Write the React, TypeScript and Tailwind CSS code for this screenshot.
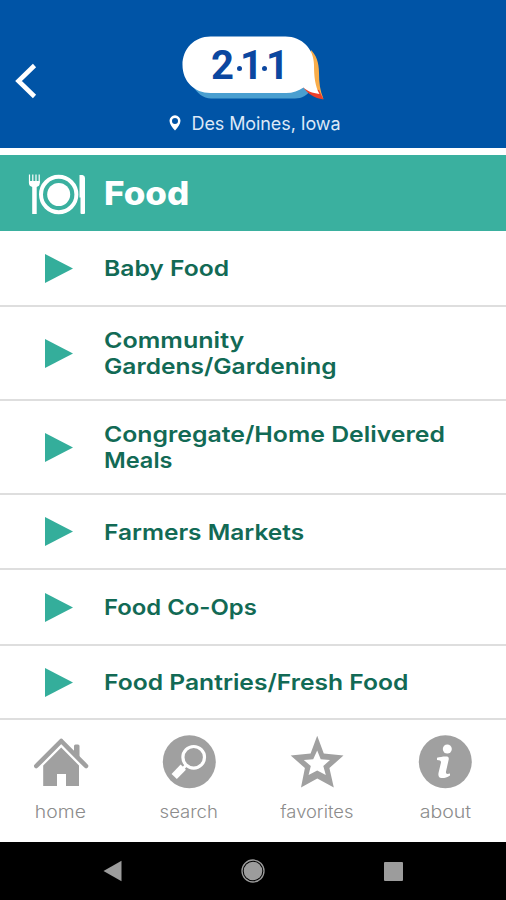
import React from 'react'

const categories = [
  { height: 'h-[76px]', lines: [{ text: 'Baby Food', stretch: 'scale-x-[1.12]' }] },
  {
    height: 'h-[94px]',
    lines: [
      { text: 'Community', stretch: 'scale-x-[1.14]' },
      { text: 'Gardens/Gardening', stretch: 'scale-x-[1.115]' },
    ],
  },
  {
    height: 'h-[94px]',
    lines: [
      { text: 'Congregate/Home Delivered', stretch: 'scale-x-[1.127]' },
      { text: 'Meals', stretch: 'scale-x-[1.07]' },
    ],
  },
  { height: 'h-[75px]', lines: [{ text: 'Farmers Markets', stretch: 'scale-x-[1.112]' }] },
  { height: 'h-[76px]', lines: [{ text: 'Food Co-Ops', stretch: 'scale-x-[1.085]' }] },
  { height: 'h-[74px]', lines: [{ text: 'Food Pantries/Fresh Food', stretch: 'scale-x-[1.12]' }] },
]

const Logo = () => (
  <div className="relative h-[64px] w-[144px]">
    <svg width="144" height="64" viewBox="181 36 144 64" fill="none">
      {/* Coloured layers behind the bubble */}
      <path d="M191 84C197 93 203 98.500 211 98.500H295C302 98.500 307 95 311 90L300 84Z" fill="#4a9fd0" />
      <path d="M311 50C316 55 319 62 319 73C319 82 320 91 323.500 99L309 84Z" fill="#f9ad4a" />
      <path d="M303 87C308 94 314 98 323.500 99.500L319 90Z" fill="#ee3f2b" />
      <path d="M210.500 36.500H285.500C302 36.500 314 49 314 65C314 76 315 86 319.500 94C312 93 307 91 303.500 87.500C298.500 91 293 93 286 93H210.500C194 93 182.500 81 182.500 65C182.500 49 194 36.500 210.500 36.500Z" fill="#fff" />
    </svg>
    <div className="absolute left-[30px] top-[9px] flex h-[42px] items-center font-['Roboto'] text-[40px] font-bold leading-[42px] text-[#0b47a0]">
      <span className="w-[23px]">2</span>
      <span className="ml-[3px] mt-[4px] h-[5px] w-[5px] rounded-full bg-[#0b47a0]" />
      <span className="w-[19px] -indent-[2px]">1</span>
      <span className="ml-[1px] mt-[4px] h-[5px] w-[5px] rounded-full bg-[#0b47a0]" />
      <span className="w-[19px] -indent-[1px]">1</span>
    </div>
  </div>
)

const PlateIcon = () => (
  <svg className="ml-[28px] mt-[2px]" width="58" height="42" viewBox="28 173 58 42" fill="none">
    <path d="M29 181V184Q29 186 32.200 187V214H36.700V187Q39.700 186 39.700 184V181Z" fill="#fff" />
    <path d="M29.500 174.500V183M32.800 174.500V183M36 174.500V183M39.200 174.500V183" stroke="#fff" strokeWidth="1.200" />
    <circle cx="58.700" cy="194.500" r="17.700" stroke="#fff" strokeWidth="4" />
    <circle cx="58.700" cy="194.500" r="11.500" fill="#fff" />
    <path d="M79.500 175H82.500Q85 175.500 85 178V213Q85 214 84 214H81.500Q80.500 214 80.500 213V197.500H79.500Z" fill="#fff" />
  </svg>
)

const HomeIcon = () => (
  <svg width="56" height="54" viewBox="0 0 56 54" fill="none">
    <path d="M41 11Q41 9.500 42.500 9.500H45Q46.500 9.500 46.500 11V24L41 18Z" fill="#a0a0a0" />
    <path d="M3.300 31L28.200 6L53 31" stroke="#a0a0a0" strokeWidth="4.600" strokeLinecap="round" strokeLinejoin="round" />
    <path d="M28.200 12.500L46 30.500V51H33V39H24V51H10.200V30.500Z" fill="#a0a0a0" />
  </svg>
)

const SearchIcon = () => (
  <svg width="56" height="54" viewBox="0 0 56 54" fill="none">
    <circle cx="28.300" cy="26.700" r="26.500" fill="#a0a0a0" />
    <circle cx="32.700" cy="22.300" r="10.800" stroke="#fff" strokeWidth="3.200" />
    <path d="M22.300 32.200L13.200 41.500" stroke="#fff" strokeWidth="7.400" />
    <path d="M21.500 34L25.500 30" stroke="#fff" strokeWidth="3" />
  </svg>
)

const StarIcon = () => (
  <svg width="56" height="54" viewBox="0 0 56 54" fill="none">
    <path fillRule="evenodd" d="M28.200 .7L34.800 18.600L54.500 20.500L40.400 33L44.800 52.500L28.300 43.500L12 52.500L15.900 33L1.700 20.500L21.600 18.600ZM28.200 15.500L24.200 24.300L14.800 25L21.800 31L19.600 40L28.200 35.500L36.800 40L34.300 31L41 25L31.700 24.300Z" fill="#a0a0a0" />
  </svg>
)

const InfoIcon = () => (
  <svg width="56" height="54" viewBox="0 0 56 54" fill="none">
    <circle cx="28.300" cy="26.700" r="26.500" fill="#a0a0a0" />
    <circle cx="30.300" cy="14" r="4.500" fill="#fff" />
    <path d="M20 22.800C23 21.800 27 21.200 30 21.500C31.500 21.700 32 22.800 31.700 24.500L29 36.500C28.600 39 30 39.300 33 38.500V40.500C30 42.500 27 43.200 24.500 43C21.500 42.700 21 40.500 21.600 37.500L24 27.500Q24.300 25 20 25Z" fill="#fff" />
  </svg>
)

const tabs = [
  { label: 'home', icon: <HomeIcon />, stretch: 'scale-x-[1.14]' },
  { label: 'search', icon: <SearchIcon />, stretch: 'scale-x-[1.09]' },
  { label: 'favorites', icon: <StarIcon />, stretch: 'scale-x-[1.08]' },
  { label: 'about', icon: <InfoIcon />, stretch: 'scale-x-[1.15]' },
]

const App = () => {
  return (
    <div className="flex h-[900px] w-[506px] flex-col overflow-hidden bg-white font-['Inter',sans-serif]">
      <header className="relative flex h-[148px] shrink-0 flex-col items-center bg-[#0054a6] pt-[36px]">
        <button className="absolute left-[14px] top-[62px]" aria-label="Back">
          <svg width="24" height="38" viewBox="0 0 24 38" fill="none">
            <path d="M20.500 3.500L4.500 19L20.500 34.500" stroke="#fff" strokeWidth="4.600" />
          </svg>
        </button>
        <Logo />
        <div className="ml-[3px] mt-[11px] flex h-[24px] items-center gap-[11px] text-[#dce8f7]">
          <svg width="12" height="16" viewBox="0 0 12 16">
            <path fillRule="evenodd" d="M6 .3A5.500 5.500 0 0 0 .5 5.800C.5 9 3.300 12.500 6 15.600C8.700 12.500 11.500 9 11.500 5.800A5.500 5.500 0 0 0 6 .3ZM6 2.900A3 3 0 1 1 6 8.900A3 3 0 0 1 6 2.900Z" fill="#fff" />
          </svg>
          <span className="text-[18px] tracking-[-0.1px]">Des Moines, Iowa</span>
        </div>
      </header>

      <div className="mt-[7px] flex h-[76px] shrink-0 items-center bg-[#3ab09f]">
        <PlateIcon />
        <h1 className="ml-[18px] mt-px origin-left scale-x-[1.06] text-[33px] font-extrabold leading-none text-white">Food</h1>
      </div>

      <ul className="shrink-0">
        {categories.map((c) => (
          <li key={c.lines[0].text} className={`flex items-center border-b-2 border-[#dedede] ${c.height}`}>
            <svg className="ml-[45px] shrink-0" width="28" height="29" viewBox="0 0 28 29">
              <path d="M0 0L28 14.500L0 29Z" fill="#34ae9b" />
            </svg>
            <div className="ml-[31px] text-[22px] font-semibold leading-[26px] text-[#126a55]">
              {c.lines.map((line) => (
                <div key={line.text} className={`w-fit origin-left whitespace-nowrap ${line.stretch}`}>{line.text}</div>
              ))}
            </div>
          </li>
        ))}
      </ul>

      <nav className="flex h-[122px] shrink-0 justify-between px-[32px] pt-[15px]">
        {tabs.map((t) => (
          <div key={t.label} className="flex w-[57px] flex-col items-center">
            {t.icon}
            <span className={`mt-[11px] whitespace-nowrap text-[17px] font-light leading-[24px] text-[#8c8c8c] ${t.stretch}`}>{t.label}</span>
          </div>
        ))}
      </nav>

      <div className="flex flex-1 items-center justify-between bg-black px-[103px]">
        <svg width="19" height="22" viewBox="0 0 19 22"><path d="M18.500 .8V21.200L.5 11Z" fill="#9c9c9c" /></svg>
        <svg width="24" height="24" viewBox="0 0 24 24" fill="none">
          <circle cx="12" cy="12" r="11" stroke="#9c9c9c" strokeWidth="1.300" />
          <circle cx="12" cy="12" r="9.300" fill="#9c9c9c" />
        </svg>
        <div className="h-[19px] w-[19px] rounded-[1px] bg-[#9c9c9c]" />
      </div>
    </div>
  )
}

export default App
